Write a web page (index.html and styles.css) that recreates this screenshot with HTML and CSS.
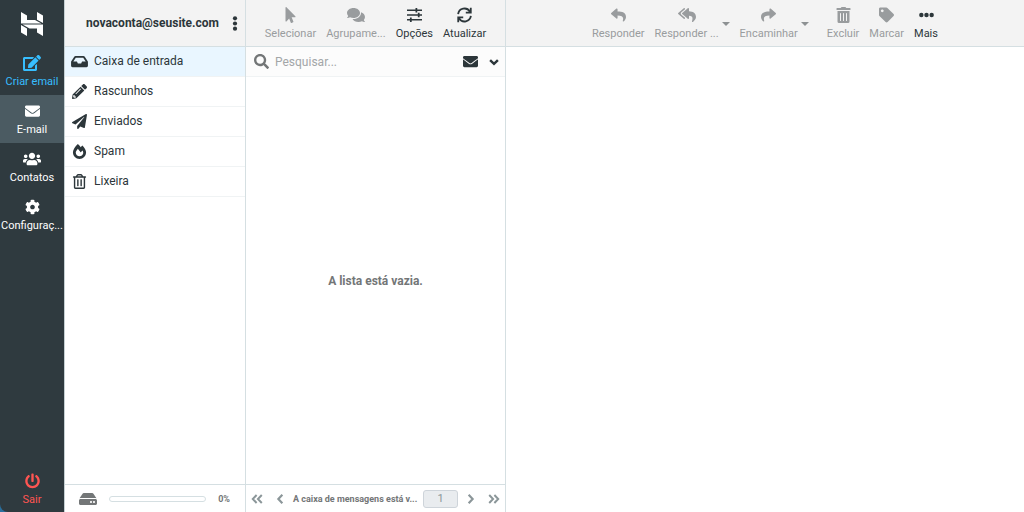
FILE: index.html
```html
<!DOCTYPE html>
<html lang="pt-BR">
<head>
<meta charset="utf-8">
<title>Webmail - Caixa de entrada</title>
<link rel="stylesheet" href="styles.css">
</head>
<body>
<svg class="sprite" aria-hidden="true">
  <symbol id="edit" viewBox="0 0 576 512"><path d="M402.600 83.200l90.200 90.200c3.800 3.800 3.800 10 0 13.800L274.400 405.600l-92.800 10.300c-12.400 1.400-22.900-9.100-21.500-21.500l10.300-92.800L388.800 83.200c3.800-3.800 10-3.800 13.800 0zm162-22.900l-48.800-48.800c-15.200-15.200-39.900-15.200-55.200 0l-35.400 35.400c-3.800 3.800-3.800 10 0 13.800l90.200 90.200c3.800 3.800 10 3.800 13.800 0l35.400-35.400c15.200-15.300 15.200-40 0-55.200zM384 346.200V448H64V128h229.800c3.200 0 6.200-1.300 8.500-3.500l40-40c7.600-7.600 2.200-20.500-8.500-20.500H48C21.500 64 0 85.500 0 112v352c0 26.500 21.500 48 48 48h352c26.500 0 48-21.500 48-48V306.200c0-10.700-12.900-16-20.500-8.500l-40 40c-2.200 2.300-3.500 5.300-3.500 8.500z"/></symbol>
  <symbol id="mail" viewBox="0 0 512 512"><path d="M502.300 190.800c3.900-3.100 9.700-.2 9.700 4.700V400c0 26.500-21.500 48-48 48H48c-26.500 0-48-21.500-48-48V195.600c0-5 5.700-7.800 9.700-4.700 22.400 17.400 52.100 39.500 154.100 113.600 21.100 15.400 56.700 47.800 92.200 47.600 35.700.3 72-32.800 92.300-47.600 102-74.100 131.600-96.300 154-113.700zM256 320c23.200.4 56.600-29.200 73.400-41.400 132.700-96.300 142.800-104.700 173.400-128.700 5.800-4.500 9.200-11.500 9.200-18.900v-19c0-26.500-21.500-48-48-48H48c-26.500 0-48 21.500-48 48v19c0 7.400 3.400 14.300 9.200 18.900 30.600 23.900 40.700 32.400 173.400 128.700 16.800 12.200 50.200 41.800 73.400 41.400z"/></symbol>
  <symbol id="users" viewBox="0 0 640 512"><path d="M96 224c35.300 0 64-28.700 64-64s-28.700-64-64-64-64 28.700-64 64 28.700 64 64 64zm448 0c35.300 0 64-28.700 64-64s-28.700-64-64-64-64 28.700-64 64 28.700 64 64 64zm32 32h-64c-17.600 0-33.500 7.100-45.100 18.600 40.300 22.100 68.900 62 75.100 109.400h66c17.700 0 32-14.300 32-32v-32c0-35.300-28.700-64-64-64zm-256 0c61.900 0 112-50.100 112-112S381.900 32 320 32 208 82.100 208 144s50.100 112 112 112zm76.800 32h-8.300c-20.800 10-43.900 16-68.500 16s-47.600-6-68.500-16h-8.300C179.600 288 128 339.600 128 403.200V432c0 26.500 21.500 48 48 48h288c26.500 0 48-21.500 48-48v-28.800c0-63.600-51.600-115.200-115.200-115.200zm-223.700-13.400C161.500 263.100 145.600 256 128 256H64c-35.300 0-64 28.700-64 64v32c0 17.700 14.300 32 32 32h65.900c6.300-47.400 34.900-87.300 75.200-109.400z"/></symbol>
  <symbol id="cog" viewBox="0 0 512 512"><path d="M487.400 315.700l-42.600-24.600c4.300-23.200 4.300-47 0-70.200l42.600-24.600c4.900-2.800 7.100-8.600 5.500-14-11.100-35.600-30-67.800-54.700-94.600-3.800-4.100-10-5.100-14.800-2.300L380.800 110c-17.900-15.400-38.500-27.300-60.800-35.100V25.800c0-5.600-3.900-10.500-9.400-11.700-36.700-8.200-74.300-7.800-109.200 0-5.500 1.200-9.400 6.100-9.400 11.700V75c-22.200 7.900-42.800 19.800-60.800 35.100L88.700 85.500c-4.900-2.800-11-1.900-14.800 2.300-24.700 26.700-43.600 58.900-54.700 94.600-1.700 5.400.6 11.200 5.500 14L67.300 221c-4.300 23.200-4.300 47 0 70.200l-42.600 24.600c-4.900 2.800-7.100 8.600-5.500 14 11.100 35.600 30 67.800 54.700 94.600 3.800 4.100 10 5.100 14.800 2.300l42.600-24.600c17.900 15.400 38.500 27.300 60.800 35.100v49.200c0 5.600 3.900 10.500 9.400 11.700 36.700 8.200 74.300 7.800 109.200 0 5.500-1.200 9.400-6.100 9.400-11.700v-49.200c22.200-7.900 42.800-19.800 60.800-35.100l42.600 24.600c4.900 2.800 11 1.900 14.800-2.300 24.700-26.700 43.600-58.900 54.700-94.600 1.500-5.500-.7-11.300-5.600-14.100zM256 336c-44.100 0-80-35.900-80-80s35.900-80 80-80 80 35.900 80 80-35.900 80-80 80z"/></symbol>
  <symbol id="power" viewBox="0 0 512 512"><path d="M400 54.100c63 45 104 118.600 104 201.900 0 136.800-110.800 247.700-247.500 248C120 504.300 8.200 393 8 256.400 7.900 173.100 48.900 99.300 111.800 54.200c11.700-8.300 28-4.800 35 7.700L162.600 90c5.900 10.500 3.100 23.800-6.600 31-41.500 30.800-68 79.600-68 134.900-.1 92.300 74.500 168.100 168 168.100 91.600 0 168.600-74.200 168-169.100-.3-51.800-24.700-101.800-68.100-134-9.700-7.200-12.400-20.500-6.500-30.900l15.800-28.100c7-12.400 23.200-16.100 34.800-7.800zM296 264V24c0-13.300-10.700-24-24-24h-32c-13.300 0-24 10.700-24 24v240c0 13.300 10.700 24 24 24h32c13.300 0 24-10.700 24-24z"/></symbol>
  <symbol id="inbox" viewBox="0 0 576 512"><path d="M567.900 243.900L462.400 85.400A48 48 0 0 0 422.400 64H153.600a48 48 0 0 0-40 21.400L8.100 243.900A48 48 0 0 0 0 270.500V400c0 26.500 21.500 48 48 48h480c26.500 0 48-21.500 48-48V270.500a48 48 0 0 0-8.100-26.600zM162.300 128h251.400l85.300 128H376l-32 64H232l-32-64H77z"/></symbol>
  <symbol id="pencil" viewBox="0 0 512 512"><path d="M497.900 142.100l-46.100 46.100c-4.700 4.700-12.300 4.700-17 0l-111-111c-4.700-4.700-4.700-12.300 0-17l46.100-46.100c18.700-18.700 49.100-18.700 67.900 0l60.100 60.100c18.800 18.700 18.800 49.100 0 67.900zM284.200 99.800L21.600 362.400.4 483.900c-2.900 16.400 11.400 30.600 27.800 27.800l121.500-21.300 262.600-262.600c4.700-4.700 4.700-12.300 0-17l-111-111c-4.800-4.700-12.400-4.700-17.100 0zM124.100 339.900c-5.500-5.500-5.500-14.300 0-19.800l154-154c5.500-5.500 14.300-5.500 19.800 0s5.500 14.300 0 19.800l-154 154c-5.500 5.500-14.300 5.500-19.800 0zM88 424h48v36.300l-64.500 11.300-31.100-31.100L51.700 376H88v48z"/></symbol>
  <symbol id="plane" viewBox="0 0 512 512"><path d="M476 3.200L12.500 270.600c-18.100 10.400-15.800 35.600 2.200 43.200L121 358.400l287.300-253.200c5.500-4.900 13.300 2.600 8.600 8.300L176 407v80.500c0 23.600 28.500 32.900 42.500 15.800L282 426l124.600 52.200c14.200 6 30.400-2.900 33-18.200l72-432C515 7.800 493.300-6.800 476 3.200z"/></symbol>
  <symbol id="fire" viewBox="0 0 448 512"><path d="M323.600 51.200c-20.800 19.300-39.600 39.600-56.200 60C240.100 73.600 206.300 35.500 168 0 69.700 91.200 0 210 0 281.600 0 408.900 100.300 512 224 512s224-103.200 224-230.400c0-53.300-51.600-163.100-124.400-230.400zM304 391.900C282.400 407 255.700 416 226.900 416 154.700 416 96 368.300 96 290.800c0-38.600 24.300-72.600 72.800-130.800 6.900 8 98.800 125.300 98.800 125.300l58.600-66.900c4.100 6.900 7.900 13.500 11.300 20 27.300 52.200 15.800 118.900-33.500 153.500z"/></symbol>
  <symbol id="trash" viewBox="0 0 448 512"><path d="M268 416h24a12 12 0 0 0 12-12V188a12 12 0 0 0-12-12h-24a12 12 0 0 0-12 12v216a12 12 0 0 0 12 12zM432 80h-82.400l-34-56.700A48 48 0 0 0 274.400 0H173.600a48 48 0 0 0-41.200 23.300L98.400 80H16A16 16 0 0 0 0 96v16a16 16 0 0 0 16 16h16v336a48 48 0 0 0 48 48h288a48 48 0 0 0 48-48V128h16a16 16 0 0 0 16-16V96a16 16 0 0 0-16-16zM171.800 50.900a6 6 0 0 1 5.200-2.900h94a6 6 0 0 1 5.200 2.900L293.600 80H154.400zM368 464H80V128h288zM156 416h24a12 12 0 0 0 12-12V188a12 12 0 0 0-12-12h-24a12 12 0 0 0-12 12v216a12 12 0 0 0 12 12z"/></symbol>
  <symbol id="trash-solid" viewBox="0 0 448 512"><path d="M32 464a48 48 0 0 0 48 48h288a48 48 0 0 0 48-48V128H32zm272-256a16 16 0 0 1 32 0v224a16 16 0 0 1-32 0zm-96 0a16 16 0 0 1 32 0v224a16 16 0 0 1-32 0zm-96 0a16 16 0 0 1 32 0v224a16 16 0 0 1-32 0zM432 32H312l-9.400-18.700A24 24 0 0 0 281.100 0H166.800a23.700 23.700 0 0 0-21.400 13.300L136 32H16A16 16 0 0 0 0 48v32a16 16 0 0 0 16 16h416a16 16 0 0 0 16-16V48a16 16 0 0 0-16-16z"/></symbol>
  <symbol id="disk" viewBox="0 0 576 512"><path d="M576 304v96c0 26.500-21.500 48-48 48H48c-26.500 0-48-21.500-48-48v-96c0-26.500 21.500-48 48-48h480c26.500 0 48 21.500 48 48zm-48-80a79.600 79.600 0 0 1 30.800 6.200L462.300 85.400A48 48 0 0 0 422.300 64H153.700a48 48 0 0 0-40 21.400L17.200 230.200A79.600 79.600 0 0 1 48 224zm-48 96c-17.700 0-32 14.300-32 32s14.300 32 32 32 32-14.300 32-32-14.300-32-32-32zm-96 0c-17.700 0-32 14.300-32 32s14.300 32 32 32 32-14.300 32-32-14.300-32-32-32z"/></symbol>
  <symbol id="dots-v" viewBox="0 0 192 512"><circle cx="96" cy="80" r="72"/><circle cx="96" cy="256" r="72"/><circle cx="96" cy="432" r="72"/></symbol>
  <symbol id="dots-h" viewBox="0 0 512 512"><circle cx="80" cy="256" r="76"/><circle cx="256" cy="256" r="76"/><circle cx="432" cy="256" r="76"/></symbol>
  <symbol id="pointer" viewBox="0 0 320 512"><path d="M302.200 329.100H196.100l55.800 136c3.900 9.400-.6 20-9.400 24l-49.200 21.400c-9.200 4-19.400-.6-23.300-9.700l-53.100-129.100-86.700 89.100C18.700 472.700 0 463.600 0 447.300V18.300C0 1.900 19.900-6.100 30.300 5.400l284.400 292.500c11.500 11.200 3 31.200-12.500 31.200z"/></symbol>
  <symbol id="comments" viewBox="0 0 576 512"><path d="M416 192c0-88.400-93.100-160-208-160S0 103.600 0 192c0 34.300 14.100 65.900 38 92-13.400 30.200-35.500 54.200-35.800 54.500-2.200 2.300-2.800 5.700-1.500 8.700S4.800 352 8 352c36.600 0 66.900-12.300 88.700-25 32.200 15.700 70.300 25 111.300 25 114.900 0 208-71.600 208-160zm122 220c23.900-26 38-57.700 38-92 0-66.900-53.500-124.200-129.300-148.100.9 6.600 1.300 13.300 1.300 20.100 0 105.900-107.700 192-240 192-10.800 0-21.300-.8-31.700-1.900C207.800 439.600 281.800 480 368 480c41 0 79.100-9.200 111.300-25 21.800 12.700 52.100 25 88.700 25 3.200 0 6.100-1.900 7.300-4.800 1.300-2.900.7-6.300-1.500-8.700-.3-.3-22.400-24.200-35.800-54.500z"/></symbol>
  <symbol id="sliders" viewBox="0 0 512 512"><path d="M0 66h290V20h60v46h162v56H350v46h-60v-46H0zM0 228h370v-46h60v46h82v56h-82v46h-60v-46H0zM0 390h100v-46h60v46h352v56H160v46h-60v-46H0z"/></symbol>
  <symbol id="sync" viewBox="0 0 512 512"><path d="M38 226A220 220 0 0 1 440 136M474 286A220 220 0 0 1 72 376M470 8V178H300M42 504V334H212" fill="none" stroke="currentColor" stroke-width="62"/></symbol>
  <symbol id="search" viewBox="0 0 512 512"><path d="M505 442.700L405.300 343c-4.500-4.500-10.600-7-17-7H372c27.600-35.300 44-79.700 44-128C416 93.100 322.900 0 208 0S0 93.100 0 208s93.100 208 208 208c48.300 0 92.700-16.400 128-44v16.300c0 6.400 2.500 12.500 7 17l99.700 99.700c9.400 9.400 24.600 9.400 33.900 0l28.300-28.300c9.400-9.400 9.400-24.600.1-34zM208 336c-70.700 0-128-57.200-128-128 0-70.700 57.200-128 128-128 70.700 0 128 57.200 128 128 0 70.700-57.200 128-128 128z"/></symbol>
  <symbol id="chevron" viewBox="0 0 512 512"><path d="M90 180l166 156 166-156" fill="none" stroke="currentColor" stroke-width="106"/></symbol>
  <symbol id="reply" viewBox="0 0 512 512"><path d="M8.300 189.800L184.300 37.900C199.700 24.500 224 35.300 224 56v80.100c160.600 1.800 288 34 288 186.300 0 61.400-39.600 122.300-83.300 154.100-13.700 9.900-33.100-2.500-28.100-18.600 45.300-145-21.500-183.500-176.600-185.700V360c0 20.700-24.300 31.500-39.700 18.200l-176-152c-11.100-9.600-11.100-26.800 0-36.400z"/></symbol>
  <symbol id="reply-all" viewBox="0 0 576 512"><path d="M136.300 226.200l176 152c15.400 13.300 39.700 2.500 39.700-18.200v-83.200c108.600 3.400 131 54.600 96.600 181.100-5 16.100 14.400 28.500 28.100 18.600C520.400 444.700 576 383.800 576 322.300c0-129.600-94.200-179.200-224-185.500V56c0-20.700-24.300-31.500-39.700-18.200l-176 152c-11.100 9.600-11.100 26.800 0 36.400zm-128-36.400l176-152C199.700 24.500 224 35.300 224 56v15.800L108.600 171.600a48 48 0 0 0 0 72.700L224 344.200V360c0 20.700-24.300 31.500-39.700 18.200l-176-152c-11.100-9.600-11.100-26.800 0-36.400z"/></symbol>
  <symbol id="tag" viewBox="0 0 512 512"><path d="M0 252.100V48C0 21.500 21.500 0 48 0h204.100a48 48 0 0 1 33.900 14.100l211.900 211.900c18.700 18.700 18.700 49.100 0 67.900L293.800 497.900c-18.700 18.700-49.100 18.700-67.900 0L14.100 286.100A48 48 0 0 1 0 252.100zM112 64c-26.500 0-48 21.500-48 48s21.500 48 48 48 48-21.500 48-48-21.500-48-48-48z"/></symbol>
  <symbol id="left" viewBox="0 0 320 512"><path d="M260 76L90 256l170 180" fill="none" stroke="currentColor" stroke-width="92"/></symbol>
  <symbol id="double-left" viewBox="0 0 512 512"><path d="M240 86L76 256l164 170M460 86L296 256l164 170" fill="none" stroke="currentColor" stroke-width="84"/></symbol>
</svg>
<div class="layout">
  <nav class="menu" aria-label="Principal">
    <svg class="logo" viewBox="0 0 22 24" role="img" aria-label="Logo"><path d="M0 0l6 3.500V8h8l6.500 3.500H0zM16 0l6 3.500V11l-6-3.200zM1.500 12.600H22V24l-6-3.500v-4H8.500zM0 13l6 3.400V24l-6-3.500z"/></svg>
    <a class="menu-item create" href="#criar"><svg class="icon wide"><use href="#edit"/></svg><span>Criar email</span></a>
    <a class="menu-item selected" href="#email"><svg class="icon"><use href="#mail"/></svg><span>E-mail</span></a>
    <a class="menu-item" href="#contatos"><svg class="icon wide"><use href="#users"/></svg><span>Contatos</span></a>
    <a class="menu-item" href="#config" title="Configurações"><svg class="icon"><use href="#cog"/></svg><span>Configuraç...</span></a>
    <a class="menu-item logout" href="#sair"><svg class="icon"><use href="#power"/></svg><span>Sair</span></a>
  </nav>

  <section class="folders">
    <header class="header account">
      <span class="username">novaconta@seusite.com</span>
      <button class="plain" aria-label="Ações da pasta"><svg class="icon narrow"><use href="#dots-v"/></svg></button>
    </header>
    <ul class="folder-list">
      <li><a class="current" href="#inbox"><svg class="icon"><use href="#inbox"/></svg>Caixa de entrada</a></li>
      <li><a href="#drafts"><svg class="icon"><use href="#pencil"/></svg>Rascunhos</a></li>
      <li><a href="#sent"><svg class="icon"><use href="#plane"/></svg>Enviados</a></li>
      <li><a href="#junk"><svg class="icon"><use href="#fire"/></svg>Spam</a></li>
      <li><a href="#trash-folder"><svg class="icon"><use href="#trash"/></svg>Lixeira</a></li>
    </ul>
    <footer class="footer quota">
      <svg class="icon wide"><use href="#disk"/></svg>
      <div class="bar" role="progressbar" aria-label="Cota" aria-valuenow="0"></div>
      <span>0%</span>
    </footer>
  </section>

  <section class="messages">
    <header class="header toolbar">
      <button class="tool" disabled><svg class="icon"><use href="#pointer"/></svg><span>Selecionar</span></button>
      <button class="tool" disabled title="Agrupamento"><svg class="icon wide"><use href="#comments"/></svg><span>Agrupame...</span></button>
      <button class="tool"><svg class="icon"><use href="#sliders"/></svg><span>Opções</span></button>
      <button class="tool"><svg class="icon"><use href="#sync"/></svg><span>Atualizar</span></button>
    </header>
    <form class="search">
      <svg class="icon"><use href="#search"/></svg>
      <input type="text" placeholder="Pesquisar..." aria-label="Pesquisar">
      <div class="search-actions">
        <button class="plain" type="button" aria-label="Não lidas"><svg class="icon"><use href="#mail"/></svg></button>
        <button class="plain" type="button" aria-label="Opções de pesquisa"><svg class="icon small"><use href="#chevron"/></svg></button>
      </div>
    </form>
    <p class="empty">A lista está vazia.</p>
    <footer class="footer pager">
      <button class="plain" aria-label="Primeira página"><svg class="icon small"><use href="#double-left"/></svg></button>
      <button class="plain" aria-label="Página anterior"><svg class="icon narrow"><use href="#left"/></svg></button>
      <span class="status" title="A caixa de mensagens está vazia">A caixa de mensagens está v...</span>
      <input type="text" value="1" aria-label="Página">
      <button class="plain flip" aria-label="Próxima página"><svg class="icon narrow"><use href="#left"/></svg></button>
      <button class="plain flip" aria-label="Última página"><svg class="icon small"><use href="#double-left"/></svg></button>
    </footer>
  </section>

  <main class="content">
    <header class="header toolbar">
      <button class="tool" disabled><svg class="icon"><use href="#reply"/></svg><span>Responder</span></button>
      <div class="split">
        <button class="tool" disabled title="Responder a todos"><svg class="icon wide"><use href="#reply-all"/></svg><span>Responder ...</span></button>
        <button class="plain caret" disabled aria-label="Opções de resposta"></button>
      </div>
      <div class="split last">
        <button class="tool flip" disabled><svg class="icon"><use href="#reply"/></svg><span>Encaminhar</span></button>
        <button class="plain caret" disabled aria-label="Opções de encaminhamento"></button>
      </div>
      <button class="tool" disabled><svg class="icon"><use href="#trash-solid"/></svg><span>Excluir</span></button>
      <button class="tool" disabled><svg class="icon"><use href="#tag"/></svg><span>Marcar</span></button>
      <button class="tool"><svg class="icon"><use href="#dots-h"/></svg><span>Mais</span></button>
    </header>
  </main>
</div>
</body>
</html>
```
FILE: styles.css
```css
* { box-sizing: border-box; }

body {
  margin: 0;
  font-family: Roboto, "Liberation Sans", sans-serif;
  font-size: 12px;
  line-height: 16px;
  color: #2c363a;
  background: #fff;
}

button, input { font: inherit; color: inherit; }
a { color: inherit; text-decoration: none; }

.sprite { position: absolute; width: 0; height: 0; }

.icon {
  display: block;
  flex: none;
  width: 15px;
  height: 15px;
  fill: currentColor;
}
.icon.wide { width: 18px; height: 16px; }
.icon.small { width: 12px; height: 12px; }
.icon.narrow { width: 8px; height: 12px; }

.plain { padding: 0; border: 0; background: none; }
.flip .icon { transform: scaleX(-1); }

.layout {
  display: grid;
  grid-template-columns: 65px 181px 260px 1fr;
  min-height: 100vh;
  background: #2a6f9e;
}

/* Main menu */
.menu {
  display: flex;
  flex-direction: column;
  font-size: 11px;
  color: #fff;
  background: #2f3a3f;
  border-right: 1px solid #c5d0d3;
  border-bottom-left-radius: 8px;
}
.logo {
  width: 22px;
  height: 24px;
  margin: 12px auto 11px;
  fill: #fff;
}
.menu-item {
  display: flex;
  flex-direction: column;
  align-items: center;
  gap: 3px;
  height: 48px;
  padding-top: 8px;
  white-space: nowrap;
}
.menu-item .icon { height: 16px; }
.menu-item.create { color: #37beff; }
.menu-item.selected { background: #4b5b62; }
.menu-item.logout { height: 47px; margin-top: auto; color: #ff5552; }

/* Shared column parts */
.folders, .messages, .content {
  display: flex;
  flex-direction: column;
  min-width: 0;
  background: #fff;
}
.folders, .messages { border-right: 1px solid #d5dfe2; }

.header {
  display: flex;
  align-items: center;
  height: 47px;
  background: #f3f3f3;
  border-bottom: 1px solid #d5dfe2;
}
.footer {
  display: flex;
  align-items: center;
  height: 28px;
  border-top: 1px solid #d5dfe2;
  font-size: 9px;
  font-weight: 700;
  color: #737677;
}

/* Folders */
.account { justify-content: flex-end; gap: 12px; padding-right: 6px; }
.account .icon { height: 15px; }
.username { font-weight: 700; }

.folder-list { flex: 1; margin: 0; padding: 0; list-style: none; }
.folder-list a {
  display: flex;
  align-items: center;
  gap: 6px;
  height: 30px;
  padding: 0 0 1px 6px;
  border-bottom: 1px solid #f0f3f4;
}
.folder-list .icon { width: 17px; }
.folder-list .current { background: #e9f6ff; }

.quota { padding: 0 15px 0 14px; gap: 12px; }
.bar {
  flex: 1;
  height: 6px;
  border: 1px solid #d5dfe2;
  border-radius: 4px;
}

/* Toolbars */
.toolbar { justify-content: center; gap: 10px; padding-top: 2px; font-size: 11px; }
.tool {
  display: flex;
  flex-direction: column;
  align-items: center;
  gap: 3px;
  padding: 0;
  border: 0;
  background: none;
  white-space: nowrap;
}
.tool .icon { height: 16px; }
.tool:disabled { color: #999c9e; }
.split { display: flex; align-items: center; gap: 3px; }
.split.last { margin-right: 8px; }
.caret {
  border: 4px solid transparent;
  border-top-color: #8d9193;
  border-bottom: 0;
}

/* Message list */
.search {
  display: flex;
  align-items: center;
  gap: 6px;
  height: 30px;
  padding: 0 5px 0 8px;
  background: #fcfcfc;
  border-bottom: 1px solid #f0f3f4;
}
.search > .icon { color: #737677; }
.search input {
  flex: 1;
  min-width: 0;
  padding: 0;
  border: 0;
  background: none;
}
.search input::placeholder { color: #a3a6a8; opacity: 1; }
.search-actions { display: flex; align-items: center; gap: 10px; }
.empty {
  margin: auto;
  font-weight: 700;
  color: #737677;
}
.pager { gap: 3px; padding: 0 1px; color: #8b9699; }
.pager .plain { display: flex; justify-content: center; width: 20px; }
.status {
  flex: 1;
  white-space: nowrap;
  color: #737677;
}
.pager input {
  width: 35px;
  height: 18px;
  padding: 0;
  border: 1px solid #ced4da;
  border-radius: 3px;
  background: #e9ecef;
  font-size: 11px;
  font-weight: 400;
  text-align: center;
}
```
